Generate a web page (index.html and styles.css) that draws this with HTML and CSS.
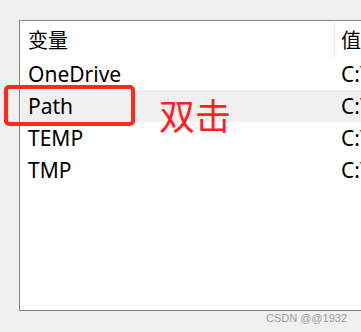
FILE: index.html
```html
<!DOCTYPE html>
<html lang="zh">
<head>
    <meta charset="UTF-8">
    <meta name="viewport" content="width=device-width, initial-scale=1">
    <title>环境变量</title>
    <link rel="stylesheet" href="styles.css">
</head>
<body>

<main class="liste">
    <div class="rad hode">
        <div class="kol navn">变量</div>
        <div class="kol verdi">值</div>
    </div>
    <div class="rad">
        <div class="kol navn">OneDrive</div>
        <div class="kol verdi">C:\</div>
    </div>
    <div class="rad valgt">
        <div class="kol navn">Path</div>
        <div class="kol verdi">C:\</div>
    </div>
    <div class="rad">
        <div class="kol navn">TEMP</div>
        <div class="kol verdi">C:\</div>
    </div>
    <div class="rad">
        <div class="kol navn">TMP</div>
        <div class="kol verdi">C:\</div>
    </div>
</main>
<div class="merke">CSDN @@1932</div>

<div class="ramme"></div>
<div class="hint">双击</div>

</body>
</html>
```

FILE: styles.css
```css
html, body {
    margin: 0;
    height: 100%;
    overflow: hidden;
}
body {
    background-color: #f0f0f0;
    font-family: "Noto Sans", "Noto Sans CJK SC", sans-serif;
    position: relative;
}
.liste {
    margin: 20px 0 0 19px;
    width: 400px;
    height: 289px;
    background-color: white;
    border: 1px solid #838383;
}
.rad {
    display: flex;
    height: 32px;
    align-items: center;
    font-size: 21px;
    color: #000;
    margin-left: 1px;
}
.hode {
    height: 37px;
    font-size: 20px;
    font-family: "Noto Sans CJK SC", sans-serif;
}
.hode .navn {
    border-right: 1px solid #e5e5e5;
    height: 35px;
    line-height: 35px;
}
.valgt {
    background-color: #f0f0f0;
}
.kol {
    box-sizing: border-box;
}
.navn {
    width: 314px;
    padding-left: 7px;
}
.verdi {
    padding-left: 6px;
    white-space: nowrap;
}
.merke {
    text-align: right;
    width: 347px;
    margin-top: 1px;
    font-family: "Liberation Sans", sans-serif;
    font-size: 11px;
    color: #9a9a9a;
}
.ramme {
    position: absolute;
    left: 4px;
    top: 85px;
    width: 123px;
    height: 33px;
    border: 4px solid #ff2a1a;
    border-radius: 5px;
}
.hint {
    position: absolute;
    left: 159px;
    top: 90px;
    font-family: "Noto Sans CJK SC", sans-serif;
    font-size: 36px;
    line-height: 48px;
    color: #ff2020;
}
```
